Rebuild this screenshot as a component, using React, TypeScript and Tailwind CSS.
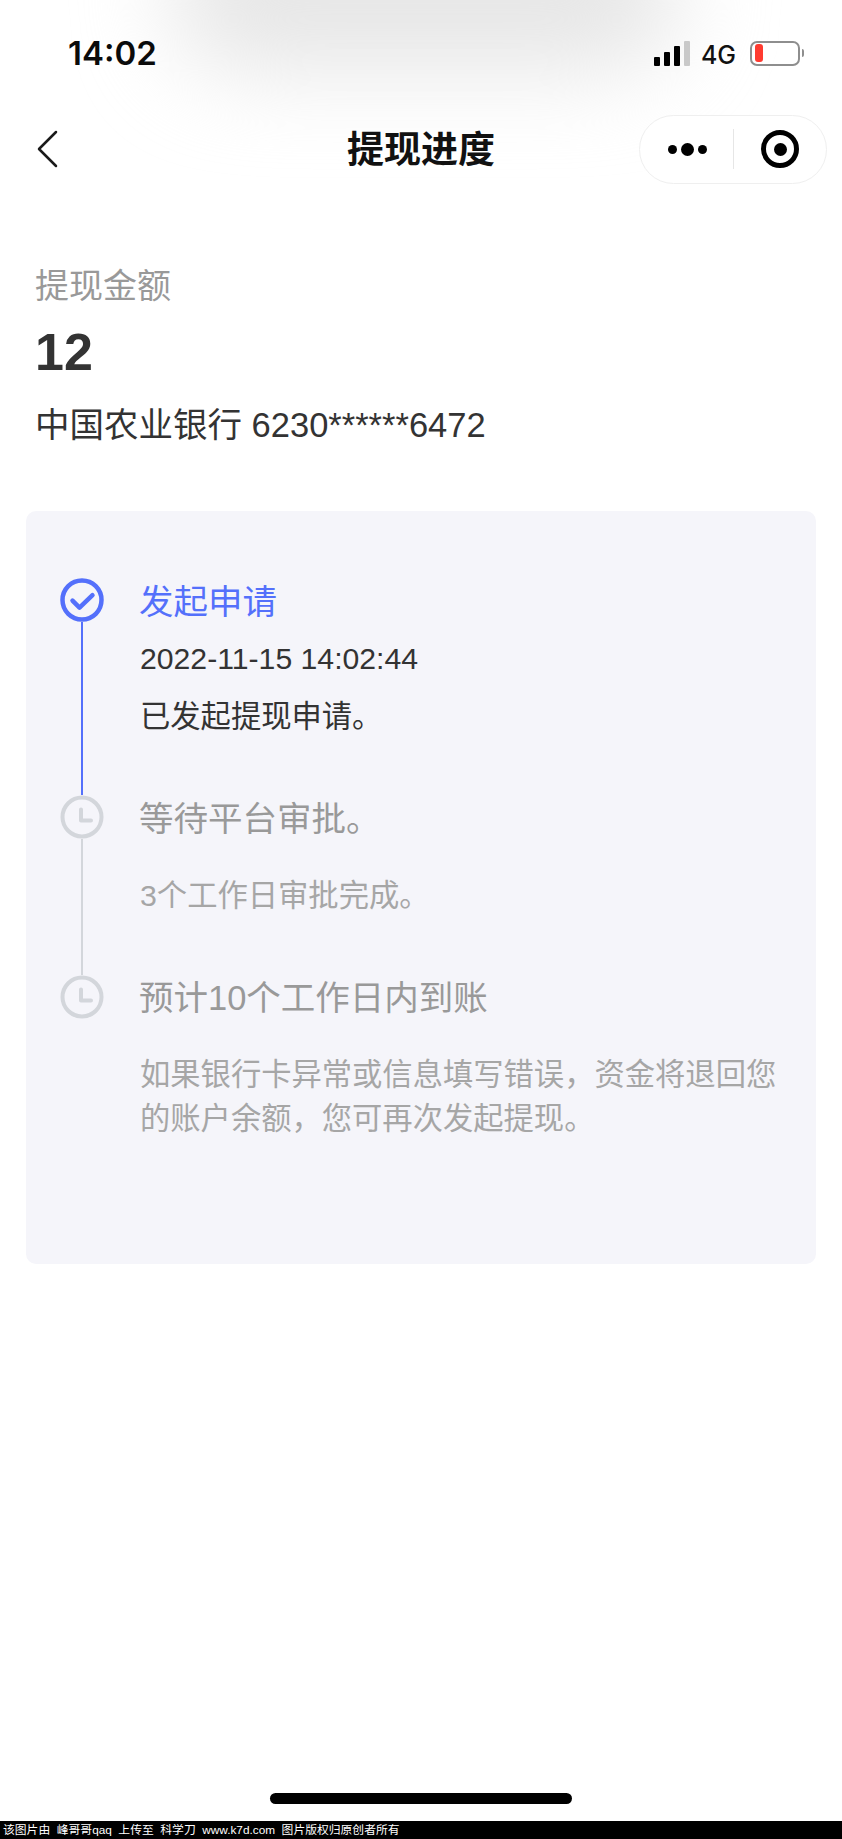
const ClockIcon = () => (
  <svg width="44" height="44" viewBox="0 0 44 44" fill="none" className="shrink-0">
    <circle cx="22" cy="22" r="19.5" stroke="#d3d6db" strokeWidth="4" />
    <path d="M21 14.500v11h10" stroke="#d3d6db" strokeWidth="4" strokeLinecap="round" strokeLinejoin="round" />
  </svg>
);

const CheckIcon = () => (
  <svg width="44" height="44" viewBox="0 0 44 44" fill="none" className="shrink-0">
    <circle cx="22" cy="22" r="19.5" stroke="#5470fb" strokeWidth="4.500" />
    <path d="M12.500 22.700l7 7 13-12.500" stroke="#5470fb" strokeWidth="4.500" strokeLinecap="round" strokeLinejoin="round" />
  </svg>
);

const App = () => {
  return (
    <div className="relative flex min-h-[1839px] w-[842px] flex-col overflow-hidden bg-white font-['Liberation_Sans','Noto_Sans_CJK_SC',sans-serif]">
      {/* Soft shadow behind the status bar */}
      <div className="absolute top-[-80px] left-[170px] h-[150px] w-[510px] rounded-full bg-[#e6e6e6] blur-[45px]" />

      {/* Status bar */}
      <div className="relative flex h-[106px] items-center justify-between pr-[38px] pl-[68px]">
        <span className="mt-[2px] font-['Inter',sans-serif] text-[33px] font-semibold text-[#0b0b0b]">14:02</span>
        <div className="flex items-center">
          <div className="flex items-end gap-[4px]">
            <div className="h-[9px] w-[6px] rounded-[1px] bg-black" />
            <div className="h-[14px] w-[6px] rounded-[1px] bg-black" />
            <div className="h-[20px] w-[6px] rounded-[1px] bg-black" />
            <div className="h-[25px] w-[6px] rounded-[1px] bg-[#c9c9c9]" />
          </div>
          <span className="mt-[5px] ml-[11px] font-['Inter',sans-serif] text-[25px] font-medium text-[#111]">4G</span>
          <div className="ml-[14px] flex h-[25px] w-[50px] items-center rounded-[7px] border-2 border-[#8e8e8e] px-[3px]">
            <div className="h-[18px] w-[8px] rounded-[3px] bg-[#ff3b30]" />
          </div>
          <div className="ml-[2px] h-[8px] w-[2px] rounded-r-[2px] bg-[#8e8e8e]" />
        </div>
      </div>

      {/* Nav bar */}
      <div className="relative flex h-[86px] items-center justify-between pr-[15px] pl-[35px]">
        <svg width="24" height="38" viewBox="0 0 24 38" fill="none">
          <path d="M21 2 4 19l17 17" stroke="#1a1a1a" strokeWidth="2.500" strokeLinecap="round" strokeLinejoin="round" />
        </svg>
        <h1 className="absolute left-0 mt-[3px] w-[842px] text-center text-[37px] font-bold text-[#111]">提现进度</h1>
        <div className="flex h-[69px] w-[188px] items-center rounded-full border border-[#efefef] bg-white">
          <div className="flex w-[93px] items-center justify-center gap-[4px] pl-[2px]">
            <div className="size-[9px] rounded-full bg-black" />
            <div className="size-[13px] rounded-full bg-black" />
            <div className="size-[9px] rounded-full bg-black" />
          </div>
          <div className="h-[40px] w-px bg-[#e6e6e6]" />
          <div className="flex flex-1 items-center justify-center">
            <div className="flex size-[38px] items-center justify-center rounded-full border-[5px] border-black">
              <div className="size-[13px] rounded-full bg-black" />
            </div>
          </div>
        </div>
      </div>

      {/* Amount */}
      <div className="px-[35px] pt-[69px]">
        <p className="text-[34px] leading-[50px] text-[#999]">提现金额</p>
        <p className="mt-[11px] text-[52px] leading-[60px] font-bold text-[#333]">12</p>
        <p className="mt-[18px] text-[34.5px] leading-[50px] text-[#333]">中国农业银行 6230******6472</p>
      </div>

      {/* Progress card */}
      <div className="mx-[26px] mt-[61px] h-[753px] rounded-[10px] bg-[#f5f5fa] pt-[67px] pl-[34px]">
        {/* Step 1 */}
        <div className="flex h-[217px] gap-[36px]">
          <div className="flex flex-col items-center">
            <CheckIcon />
            <div className="w-[2px] flex-1 bg-[#5470fb]" />
          </div>
          <div className="-mt-[1px]">
            <p className="-ml-px text-[34.5px] leading-[50px] text-[#5470fb]">发起申请</p>
            <p className="mt-[10px] text-[30.2px] leading-[44px] text-[#333]">2022-11-15 14:02:44</p>
            <p className="mt-[14px] text-[30.3px] leading-[44px] text-[#333]">已发起提现申请。</p>
          </div>
        </div>

        {/* Step 2 */}
        <div className="flex h-[180px] gap-[36px]">
          <div className="flex flex-col items-center">
            <ClockIcon />
            <div className="w-[2px] flex-1 bg-[#d3d6db]" />
          </div>
          <div className="-mt-[1px]">
            <p className="-ml-px text-[34.5px] leading-[50px] text-[#999]">等待平台审批。</p>
            <p className="mt-[30px] text-[30.3px] leading-[44px] text-[#a6a6a6]">3个工作日审批完成。</p>
          </div>
        </div>

        {/* Step 3 */}
        <div className="flex gap-[36px]">
          <ClockIcon />
          <div className="-mt-[2px] w-[640px]">
            <p className="-ml-px text-[34.5px] leading-[50px] text-[#999]">预计10个工作日内到账</p>
            <p className="mt-[30px] text-[30.3px] leading-[44px] text-[#a6a6a6]">
              如果银行卡异常或信息填写错误，资金将退回您的账户余额，您可再次发起提现。
            </p>
          </div>
        </div>
      </div>

      {/* Home indicator + watermark */}
      <div className="mt-auto">
        <div className="mx-auto mb-[17px] h-[11px] w-[302px] rounded-full bg-black" />
        <div className="h-[18px] bg-black pl-[3px] text-[11.8px] leading-[18px] whitespace-pre text-white">
          该图片由  峰哥哥qaq  上传至  科学刀  www.k7d.com  图片版权归原创者所有
        </div>
      </div>
    </div>
  );
};

export default App;
